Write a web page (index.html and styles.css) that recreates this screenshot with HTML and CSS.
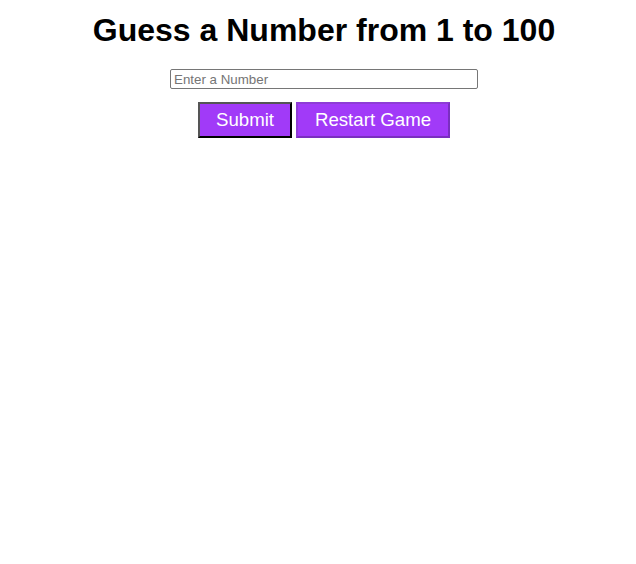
FILE: index.html
```html
<!DOCTYPE html>
<html>
<head>
<meta charset="utf-8">
<link rel="stylesheet" href="styles.css">
</head>
<body>
<div class="game">
  <h1 class="title">Guess a Number from 1 to 100</h1>
  <input class="guess" type="text" placeholder="Enter a Number">
  <div class="actions">
    <button class="btn btn-submit">Submit</button>
    <button class="btn btn-restart">Restart Game</button>
  </div>
</div>
</body>
</html>
```
FILE: styles.css
```css
html, body { background: #fff; }
body {
  margin: 0;
  font-family: "Liberation Sans", Arial, sans-serif;
}
.game {
  padding: 12px 0 0 12px;
  margin: 0 8px;
  display: flex;
  flex-direction: column;
  align-items: center;
}
.title {
  margin: 0;
  font-size: 32px;
  font-weight: bold;
  line-height: 37px;
  color: #000;
}
.guess {
  margin-top: 20px;
  box-sizing: border-box;
  width: 308px;
  height: 20px;
  padding: 1px 3px;
  border: 1px solid #767676;
  border-radius: 2px;
  font-family: "Liberation Sans", Arial, sans-serif;
  font-size: 13.33px;
}
.guess::placeholder { color: #757575; }
.actions {
  margin-top: 13px;
  display: flex;
  gap: 4px;
}
.btn {
  box-sizing: border-box;
  height: 36px;
  padding: 0;
  white-space: nowrap;
  font-family: "Liberation Sans", Arial, sans-serif;
  font-size: 18.67px;
  color: #fff;
  background: #a13af8;
  border: 2px solid;
  cursor: pointer;
}
.btn-submit {
  width: 94px;
  border-color: #555 #000 #000 #555;
}
.btn-restart {
  width: 154px;
  border-color: #8e3cd6 #7a2fc0 #7a2fc0 #8e3cd6;
}
```
